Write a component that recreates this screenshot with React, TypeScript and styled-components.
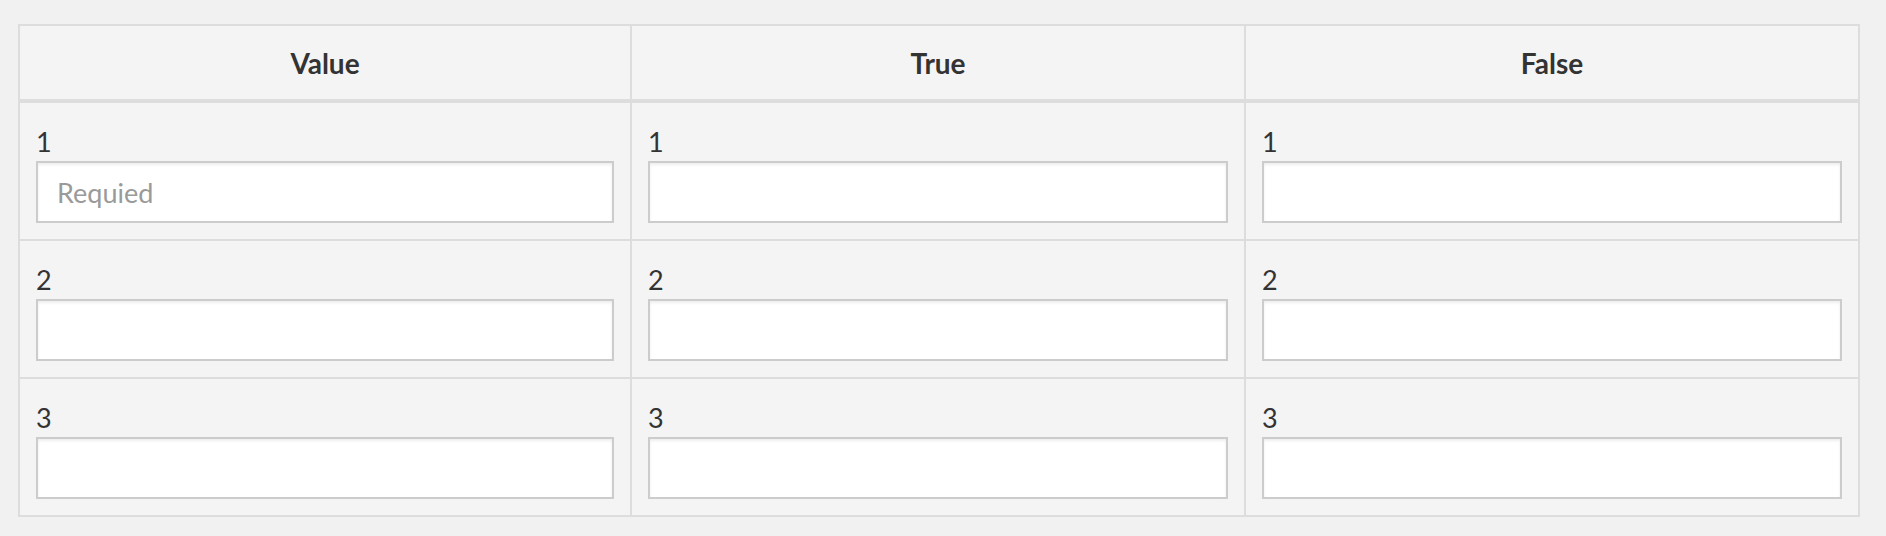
import React from "react";
import styled, { createGlobalStyle } from "styled-components";

const GlobalStyle = createGlobalStyle`
  html, body {
    margin: 0;
    padding: 0;
    background: #f1f1f1;
  }
  body {
    font-family: Lato, "Open Sans", sans-serif;
    color: #333;
  }
  * { box-sizing: border-box; }
`;

const Page = styled.div`
  padding: 24px 0 0 18px;
`;

const Table = styled.div`
  width: 1842px;
  border: 2px solid #dddddd;
  background: #f4f4f4;
`;

const Row = styled.div<{ $head?: boolean }>`
  display: grid;
  grid-template-columns: 610px 614px 614px;
  border-top: ${(p) => (p.$head ? "none" : "2px solid #dddddd")};
  &:nth-child(2) {
    border-top: 4px solid #dddddd;
  }
`;

const HeadCell = styled.div`
  height: 73px;
  display: flex;
  align-items: center;
  justify-content: center;
  font-size: 28px;
  font-weight: 700;
  color: #333;
  & + & {
    border-left: 2px solid #dddddd;
  }
`;

const Cell = styled.div`
  height: 136px;
  padding: 16px;
  & + & {
    border-left: 2px solid #dddddd;
  }
`;

const Label = styled.label`
  display: block;
  height: 42px;
  padding-top: 4px;
  font-size: 27px;
  line-height: 38px;
  color: #333;
`;

const Input = styled.input`
  display: block;
  width: 100%;
  height: 62px;
  border: 2px solid #cccccc;
  background: #ffffff;
  box-shadow: inset 0 2px 3px rgba(0, 0, 0, 0.07);
  padding: 0 19px;
  font-family: Lato, "Open Sans", sans-serif;
  font-size: 27px;
  color: #333;
  outline: none;
  &::placeholder {
    color: #9a9a9a;
  }
`;

const columns = ["Value", "True", "False"];
const rows = [1, 2, 3];

export default function App() {
  return (
    <>
      <GlobalStyle />
      <Page>
        <Table>
          <Row $head>
            {columns.map((c) => (
              <HeadCell key={c}>{c}</HeadCell>
            ))}
          </Row>
          {rows.map((r) => (
            <Row key={r}>
              {columns.map((c) => (
                <Cell key={c}>
                  <Label>{r}</Label>
                  <Input
                    placeholder={r === 1 && c === "Value" ? "Requied" : ""}
                  />
                </Cell>
              ))}
            </Row>
          ))}
        </Table>
      </Page>
    </>
  );
}
